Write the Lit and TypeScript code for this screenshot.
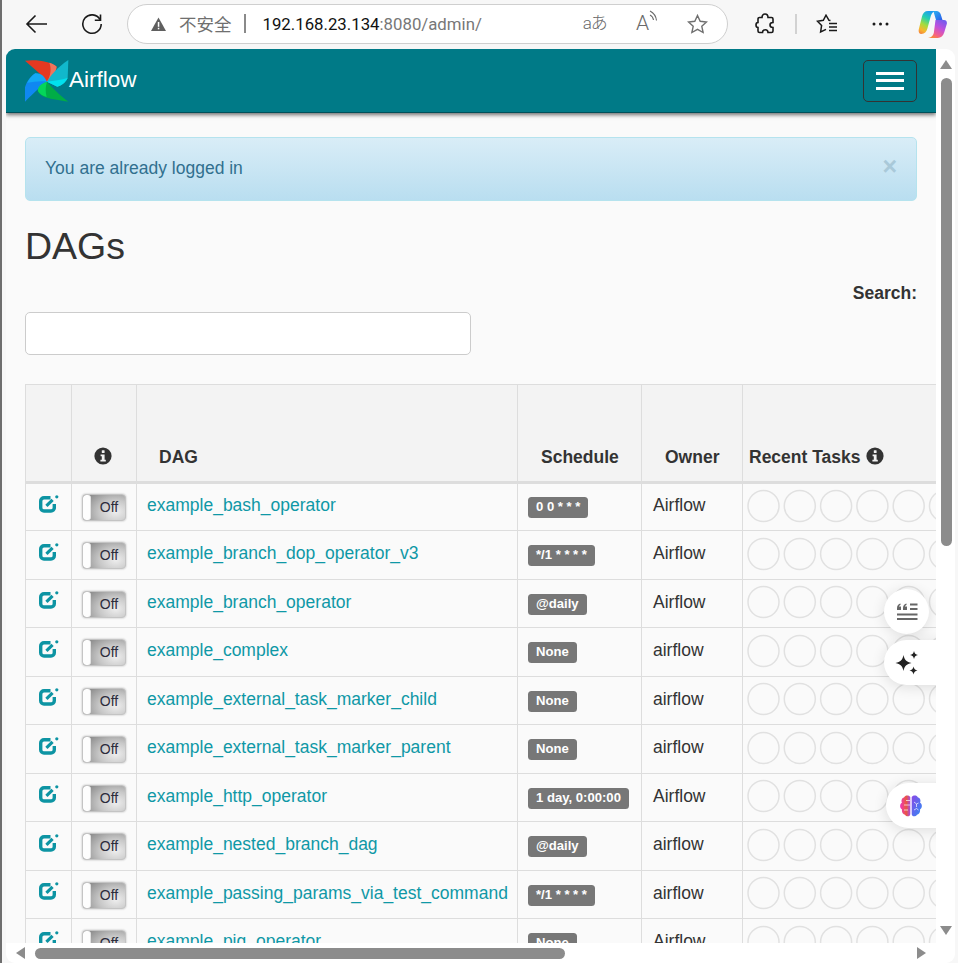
import { LitElement, html, css, svg } from 'lit';
import { customElement } from 'lit/decorators.js';

const dags = [
  ['example_bash_operator', '0 0 * * *', 'Airflow'],
  ['example_branch_dop_operator_v3', '*/1 * * * *', 'Airflow'],
  ['example_branch_operator', '@daily', 'Airflow'],
  ['example_complex', 'None', 'airflow'],
  ['example_external_task_marker_child', 'None', 'airflow'],
  ['example_external_task_marker_parent', 'None', 'airflow'],
  ['example_http_operator', '1 day, 0:00:00', 'Airflow'],
  ['example_nested_branch_dag', '@daily', 'airflow'],
  ['example_passing_params_via_test_command', '*/1 * * * *', 'airflow'],
  ['example_pig_operator', 'None', 'Airflow'],
];

const infoIcon = html`<svg class="info" viewBox="0 0 18 18">
  <circle cx="9" cy="9" r="8.6" fill="#333"></circle>
  <rect x="7.8" y="3.2" width="2.8" height="2.8" rx=".6" fill="#f3f3f3"></rect>
  <path d="M6.6 7.4h4v5.4h1.2v1.8H6.4v-1.8h1.4V9.2H6.6z" fill="#f3f3f3"></path>
</svg>`;

const editIcon = html`<svg class="edit" viewBox="0 0 20 18" fill="none" stroke="#0d94a3">
  <path d="M11.500 2.700H5a3.300 3.300 0 0 0-3.300 3.300v6.700A3.300 3.300 0 0 0 5 16h7a3.300 3.300 0 0 0 3.300-3.300V9" stroke-width="3.400"></path>
  <path d="M7.400 10.800 13.600 4.800" stroke-width="3.200"></path>
  <circle cx="17.800" cy="1.800" r="1.600" fill="#0d94a3" stroke="none"></circle>
</svg>`;

const taskCircles = html`<svg class="tasks" width="330" height="36">
  ${[0, 1, 2, 3, 4, 5, 6, 7, 8].map(
    (i) => svg`<circle cx=${16.5 + i * 36.3} cy="18" r="15.500" fill="#fafafa" stroke="#e1e1e1" stroke-width="1.500"></circle>`
  )}
</svg>`;

const logo = html`<svg class="logo" viewBox="15 28 132 130">
  <path d="M15 32C50 27 90 34 110 50 108 66 95 85 81 95L58 70Z" fill="#e43921"></path>
  <path d="M88 38C98 40 105 45 110 50 108 66 95 85 81 95 92 78 95 55 88 38Z" fill="#f0745c"></path>
  <path d="M145 30 143 84C135 100 122 108 112 110L81 95C90 78 112 52 145 30Z" fill="#11b8cc"></path>
  <path d="M81 95C100 92 125 90 143 84 135 100 122 108 112 110Z" fill="#00e1ee"></path>
  <path d="M15 155 15 112C22 90 34 78 46 70L81 95C62 108 38 132 15 155Z" fill="#0f88f2"></path>
  <path d="M46 70C60 68 72 76 81 95 60 92 40 96 22 98 28 86 36 76 46 70Z" fill="#13a9f5"></path>
  <path d="M145 155 92 146C72 142 60 136 54 124L81 95C96 112 120 136 145 155Z" fill="#00ad46"></path>
  <path d="M54 124C52 112 62 100 81 95 76 110 76 125 80 141 68 138 59 132 54 124Z" fill="#04d659"></path>
</svg>`;

@customElement('app-root')
export class AppRoot extends LitElement {
  static styles = css`
    :host {
      display: block;
      width: 958px;
      height: 963px;
      overflow: hidden;
      font-family: 'Liberation Sans', Arial, sans-serif;
      color: #333;
    }
    .window {
      width: 958px;
      height: 963px;
      box-sizing: border-box;
      background: #f7f7f7;
      border-left: 2px solid #6e6e6e;
      display: flex;
      flex-direction: column;
    }

    /* browser toolbar */
    .toolbar {
      height: 49px;
      flex: none;
      display: flex;
      align-items: center;
      padding-bottom: 2px;
      box-sizing: border-box;
    }
    .toolbar svg {
      display: block;
      flex: none;
    }
    .back {
      margin-left: 23px;
    }
    .reload {
      margin-left: 32px;
    }
    .address {
      margin-left: 24px;
      width: 601px;
      height: 40px;
      box-sizing: border-box;
      background: #fff;
      border: 1px solid #cfcfcf;
      border-radius: 20px;
      display: flex;
      align-items: center;
      padding-left: 23px;
      font-family: Roboto, 'Noto Sans CJK SC', sans-serif;
      font-size: 16.8px;
      color: #111;
    }
    .insecure {
      margin-left: 13px;
      font-family: 'Noto Sans CJK SC', sans-serif;
      font-size: 17.5px;
      color: #6f6f6f;
    }
    .pipe {
      width: 2px;
      height: 19px;
      margin: 0 17px 0 12px;
      background: #8a8a8a;
    }
    .url-rest {
      color: #777;
    }
    .addr-tools {
      margin-left: auto;
      display: flex;
      align-items: center;
      padding-right: 19px;
      color: #6a6a6a;
    }
    .translate {
      font-family: Roboto, 'Noto Sans CJK SC', sans-serif;
      font-size: 17px;
      font-weight: 300;
      line-height: 1;
      letter-spacing: -1px;
    }
    .read {
      margin-left: 29px;
      display: flex;
      align-items: flex-start;
    }
    .read span {
      font-family: Roboto, sans-serif;
      font-weight: 300;
      font-size: 21px;
      line-height: 1;
    }
    .read svg {
      margin-top: -3px;
    }
    .addr-star {
      margin-left: 29px;
    }
    .puzzle {
      margin-left: 27px;
    }
    .tool-sep {
      width: 2px;
      height: 20px;
      margin-left: 20px;
      background: #d2d2d2;
    }
    .favs {
      margin-left: 19px;
    }
    .dots {
      margin-left: 34px;
    }
    .copilot {
      margin-left: 29px;
    }

    /* page area */
    .viewport {
      flex: 1;
      min-height: 0;
      margin: 0 3px 0 4px;
      display: grid;
      grid-template-columns: 930px 19px;
      grid-template-rows: 894px 20px;
      background: #fff;
      border-radius: 9px;
      overflow: hidden;
    }
    .page {
      position: relative;
      overflow: hidden;
      background: #fafafa;
    }
    .navbar {
      height: 64px;
      box-sizing: border-box;
      background: #007a87;
      border-bottom: 1px solid #00505a;
      box-shadow: 0 2px 4px rgba(0, 0, 0, 0.55);
      padding: 0 19px;
      display: flex;
      align-items: center;
      justify-content: space-between;
    }
    .brand {
      display: flex;
      align-items: center;
      color: #fff;
      font-size: 22.5px;
    }
    .logo {
      width: 44px;
      height: 44px;
      display: block;
    }
    .brand span {
      position: relative;
      top: -1px;
    }
    .burger {
      width: 54px;
      height: 42px;
      box-sizing: border-box;
      border: 1px solid #333;
      border-radius: 5px;
      display: flex;
      flex-direction: column;
      align-items: center;
      justify-content: center;
      gap: 4.5px;
    }
    .burger i {
      display: block;
      width: 28px;
      height: 3px;
      background: #fff;
    }
    .content {
      padding: 24px 19px 0;
    }
    .alert {
      height: 64px;
      box-sizing: border-box;
      background: linear-gradient(#d9edf7, #b9def0);
      border: 1px solid #b5e3ee;
      border-radius: 5px;
      padding: 0 19px 2px;
      display: flex;
      align-items: center;
      justify-content: space-between;
      color: #31708f;
      font-size: 17.5px;
    }
    .close {
      color: #a9c9d9;
      font-size: 25px;
      font-weight: bold;
      line-height: 1;
      margin: -4px 0 0 0;
    }
    h2 {
      margin: 24px 0 0;
      font-size: 37.5px;
      font-weight: 400;
      line-height: 42px;
    }
    .search-label {
      margin-top: 16px;
      text-align: right;
      font-size: 17.5px;
      font-weight: bold;
      line-height: 20px;
    }
    .search {
      display: block;
      margin-top: 9px;
      width: 446px;
      height: 43px;
      box-sizing: border-box;
      background: #fff;
      border: 1px solid #ccc;
      border-radius: 5px;
    }

    /* dag table */
    table {
      margin-top: 29px;
      width: 1300px;
      table-layout: fixed;
      border-collapse: collapse;
      font-size: 17.5px;
    }
    th,
    td {
      border: 1px solid #ddd;
      padding: 0;
      overflow: hidden;
      white-space: nowrap;
    }
    thead tr {
      height: 97.5px;
      background: #f3f3f3;
    }
    thead th {
      border-bottom: 3px solid #ddd;
      vertical-align: bottom;
      text-align: left;
      font-weight: bold;
      line-height: 20px;
      padding-bottom: 14px;
    }
    th.sort {
      padding-left: 23px;
    }
    th.dag-head {
      padding-left: 22px;
    }
    th.tasks-head {
      padding-left: 6px;
    }
    .tasks-title {
      display: flex;
      align-items: center;
      gap: 5px;
    }
    th.toggle-head {
      text-align: center;
    }
    .info {
      width: 18px;
      height: 18px;
      display: inline-block;
      vertical-align: bottom;
    }
    th.toggle-head .info {
      position: relative;
      top: -2px;
      left: -1px;
    }
    .tasks-title .info {
      position: relative;
      top: -1px;
    }
    tbody tr {
      height: 48.5px;
    }
    .edit-cell {
      text-align: center;
    }
    .edit {
      display: inline-block;
      width: 20px;
      height: 18px;
      vertical-align: middle;
      position: relative;
      top: -4px;
    }
    .switch {
      margin: 0 auto;
      width: 44px;
      height: 27px;
      box-sizing: border-box;
      position: relative;
      top: 1px;
      display: flex;
      border: 1px solid #c4c4c4;
      border-radius: 4px;
      overflow: hidden;
      background: radial-gradient(ellipse 36px 26px at 78% 68%, #eeeeee 0%, #c8c8c8 45%, #868686 100%);
      box-shadow: 0 0 2px rgba(0, 0, 0, 0.3);
    }
    .switch i {
      width: 7px;
      background: #fdfdfd;
      border-right: 1px solid #e2e2e2;
      border-radius: 3px;
      flex: none;
    }
    .switch span {
      flex: 1;
      text-align: center;
      font-size: 14px;
      line-height: 25px;
      color: #2c2c3c;
      padding-left: 2px;
    }
    .name {
      padding-left: 10px;
      color: #0f98a6;
      line-height: 20px;
      position: relative;
      top: -1px;
    }
    td.name-cell,
    td.owner {
      vertical-align: middle;
    }
    .badge-cell {
      padding-left: 10px;
    }
    .badge {
      display: inline-block;
      background: #777;
      color: #fff;
      font-size: 13.1px;
      font-weight: bold;
      line-height: 1;
      padding: 3px 8px 4.5px;
      border-radius: 3.5px;
    }
    td.owner {
      padding-left: 11px;
    }
    td.owner span {
      position: relative;
      top: -1px;
    }
    td.circles {
      padding-left: 4px;
    }
    .tasks {
      display: block;
      position: relative;
      top: -1px;
    }

    /* floating page assistants */
    .float {
      position: absolute;
      height: 45px;
      background: #fff;
      border-radius: 23px;
      box-shadow: 0 2px 14px rgba(0, 0, 0, 0.12);
      display: flex;
      align-items: center;
    }
    .float svg {
      display: block;
    }
    .f-quote {
      left: 878px;
      top: 540px;
      width: 45px;
      justify-content: center;
    }
    .f-spark {
      left: 878px;
      top: 591px;
      width: 90px;
      padding-left: 10px;
      box-sizing: border-box;
    }
    .f-brain {
      left: 880px;
      top: 734px;
      width: 90px;
      padding-left: 13px;
      box-sizing: border-box;
    }

    /* scrollbars */
    .vbar {
      display: flex;
      flex-direction: column;
      align-items: center;
      padding: 11px 0 8px;
      box-sizing: border-box;
    }
    .vthumb {
      width: 11px;
      height: 468px;
      margin-top: 9px;
      margin-left: 1px;
      background: #8c8c8c;
      border-radius: 6px;
    }
    .arrow-up,
    .arrow-down {
      width: 0;
      height: 0;
      margin-left: 1px;
      border-left: 6.5px solid transparent;
      border-right: 6.5px solid transparent;
    }
    .arrow-up {
      border-bottom: 9px solid #8c8c8c;
    }
    .arrow-down {
      margin-top: auto;
      border-top: 9px solid #8c8c8c;
    }
    .hbar {
      grid-column: 1 / 3;
      display: flex;
      align-items: center;
      padding: 0 29px 0 10px;
      box-sizing: border-box;
    }
    .hthumb {
      width: 530px;
      height: 11px;
      margin-left: 10px;
      background: #8c8c8c;
      border-radius: 6px;
    }
    .arrow-left,
    .arrow-right {
      width: 0;
      height: 0;
      border-top: 6px solid transparent;
      border-bottom: 6px solid transparent;
    }
    .arrow-left {
      border-right: 9px solid #8c8c8c;
    }
    .arrow-right {
      margin-left: auto;
      border-left: 9px solid #8c8c8c;
    }
  `;

  renderToolbar() {
    return html`
      <div class="toolbar">
        <svg class="back" width="24" height="20" viewBox="0 0 24 20" fill="none" stroke="#1a1a1a" stroke-width="1.600">
          <path d="M22 10H2M10.500 1.500 2 10l8.500 8.500"></path>
        </svg>
        <svg class="reload" width="22" height="22" viewBox="0 0 22 22" fill="none" stroke="#1a1a1a" stroke-width="1.600">
          <path d="M19 6.500A9.200 9.200 0 1 0 20.200 11"></path>
          <path d="M19.500 1.500v5.700h-5.700"></path>
        </svg>
        <div class="address">
          <svg width="15" height="14" viewBox="0 0 15 14">
            <path d="M7.500 .5 15 14H0z" fill="#5f5f5f"></path>
            <rect x="6.800" y="5" width="1.500" height="4.800" fill="#fff"></rect>
            <rect x="6.800" y="10.800" width="1.500" height="1.500" fill="#fff"></rect>
          </svg>
          <span class="insecure">不安全</span>
          <i class="pipe"></i>
          <span>192.168.23.134<span class="url-rest">:8080/admin/</span></span>
          <div class="addr-tools">
            <span class="translate">aあ</span>
            <div class="read">
              <span>A</span>
              <svg width="9" height="14" viewBox="0 0 9 14" fill="none" stroke="#6a6a6a" stroke-width="1.100">
                <path d="M1 1c3.500 1.800 6 5 6.500 9.500M1 5c2 1 3.200 2.800 3.500 5"></path>
              </svg>
            </div>
            <svg class="addr-star" width="21" height="20" viewBox="0 0 21 20" fill="none" stroke="#6f6f6f" stroke-width="1.400">
              <path d="M10.500 1.500 13.200 7.300 19.500 8 14.800 12.300 16.100 18.500 10.500 15.400 4.900 18.500 6.200 12.300 1.500 8 7.800 7.300z"></path>
            </svg>
          </div>
        </div>
        <svg class="puzzle" width="20" height="22" viewBox="0 0 20 22" fill="none" stroke="#1a1a1a" stroke-width="1.600">
          <path d="M7 4.500C7 2.500 8.300 1 10 1s3 1.500 3 3.500h3.500a1.500 1.500 0 0 1 1.500 1.500v3.500c-2 0-3 .8-3 2.500s1 2.500 3 2.500V18a1.500 1.500 0 0 1-1.500 1.500H13c0-1.700-1-2.700-2.700-2.700S7.500 17.800 7.500 19.500H4.500A1.500 1.500 0 0 1 3 18v-3.500c-1.200 0-2-1-2-2.500s.8-2.500 2-2.500V6a1.500 1.500 0 0 1 1.500-1.500z"></path>
        </svg>
        <i class="tool-sep"></i>
        <svg class="favs" width="22" height="20" viewBox="0 0 22 20" fill="none" stroke="#1a1a1a" stroke-width="1.500">
          <path d="M14.500 6.500 13 6.300 10 1.200 7.300 6.300 1.500 7.300 5.600 11.500 4.600 18 10 15.300"></path>
          <path d="M13 9.500h8M13 13h8M13 16.500h8"></path>
        </svg>
        <svg class="dots" width="17" height="4" viewBox="0 0 17 4" fill="#1a1a1a">
          <circle cx="2" cy="2" r="1.500"></circle>
          <circle cx="8.500" cy="2" r="1.500"></circle>
          <circle cx="15" cy="2" r="1.500"></circle>
        </svg>
        <svg class="copilot" width="29" height="28" viewBox="0 0 29 28">
          <defs>
            <linearGradient id="cpL" x1=".6" y1="0" x2=".2" y2="1">
              <stop offset="0" stop-color="#1c9df0"></stop>
              <stop offset=".3" stop-color="#22d0b0"></stop>
              <stop offset=".6" stop-color="#a5dc3c"></stop>
              <stop offset=".85" stop-color="#f8b52e"></stop>
              <stop offset="1" stop-color="#f58a3c"></stop>
            </linearGradient>
            <linearGradient id="cpR" x1=".9" y1="0" x2=".3" y2="1">
              <stop offset="0" stop-color="#6a5cf0"></stop>
              <stop offset=".45" stop-color="#c04fdc"></stop>
              <stop offset=".8" stop-color="#f4608a"></stop>
              <stop offset="1" stop-color="#f8883c"></stop>
            </linearGradient>
            <linearGradient id="cpT" x1="0" y1="0" x2="1" y2="1">
              <stop offset="0" stop-color="#2cb5f2"></stop>
              <stop offset="1" stop-color="#2a5be8"></stop>
            </linearGradient>
          </defs>
          <path d="M15 1h3.500c2 0 3.600 1.300 4.200 3.300L24.500 10H18l-1.600-5.500C16 3 15.700 1.800 15 1z" fill="url(#cpT)"></path>
          <path d="M10 1h7c-2.800.8-3.800 3.500-4.600 6.500l-3 11c-.9 3.200-2.800 5.500-6 5.500C1 24 .2 21.800 .8 19.200L4 6.500C4.800 3 6.800 1 10 1z" fill="url(#cpL)"></path>
          <path d="M17.500 10H26c2.400 0 3.400 2 2.700 4.300l-2.500 8.200C25.200 25.700 23 28 19.800 28H10c3 0 5-2.200 5.800-5z" fill="url(#cpR)"></path>
        </svg>
      </div>
    `;
  }

  renderFloats() {
    return html`
      <div class="float f-quote">
        <svg width="22" height="20" viewBox="0 0 22 20" fill="#666">
          <path d="M1 6c0-2.500 1.500-4 3.500-4.500v1.500C3.500 3.300 3 4 3 4.500h2v3.500H1zM7 6c0-2.500 1.500-4 3.500-4.500v1.500C9.500 3.300 9 4 9 4.500h2v3.500H7z"></path>
          <rect x="14" y="1.500" width="7.500" height="2"></rect>
          <rect x="14" y="6" width="7.500" height="2"></rect>
          <rect x="1" y="11.500" width="20.500" height="2"></rect>
          <rect x="1" y="16" width="20.500" height="2"></rect>
        </svg>
      </div>
      <div class="float f-spark">
        <svg width="26" height="24" viewBox="0 0 26 24" fill="#222">
          <path d="M9.500 4c1 5 3 7 8 8-5 1-7 3-8 8-1-5-3-7-8-8 5-1 7-3 8-8z"></path>
          <path d="M20 0c.5 2.500 1.500 3.500 4 4-2.500.5-3.500 1.500-4 4-.5-2.500-1.500-3.500-4-4 2.500-.5 3.500-1.500 4-4z"></path>
          <path d="M19.500 15.500c.5 2.500 1.500 3.500 4 4-2.500.5-3.500 1.500-4 4-.5-2.500-1.500-3.500-4-4 2.500-.5 3.500-1.500 4-4z"></path>
        </svg>
      </div>
      <div class="float f-brain">
        <svg width="24" height="24" viewBox="0 0 24 24" fill="none">
          <defs>
            <linearGradient id="brL" x1="0" y1=".5" x2="1" y2=".5">
              <stop offset="0" stop-color="#f035c0"></stop>
              <stop offset=".6" stop-color="#e9583e"></stop>
              <stop offset="1" stop-color="#a848e6"></stop>
            </linearGradient>
            <linearGradient id="brR" x1="0" y1="0" x2="1" y2="1">
              <stop offset="0" stop-color="#8a48e6"></stop>
              <stop offset="1" stop-color="#2f8cf5"></stop>
            </linearGradient>
          </defs>
          <path d="M11.300 3C10.500 1 6 .5 5 3.500 2.500 4 2 7 3 8.500 .5 10 .5 14 3 15.500c-.5 3 1.500 5 3 5.200 1.500 2.500 5.300 2 5.300-.7z" fill="url(#brL)"></path>
          <path d="M12.700 3c.8-2 5.300-2.500 6.300.5 2.500.5 3 3.500 2 5 2.500 1.500 2.500 5.500 0 7 .5 3-1.500 5-3 5.200-1.500 2.500-5.300 2-5.300-.7z" fill="url(#brR)"></path>
          <path d="M5 11h6M7 6.500h4M5 16h4M15 8l2.500 2 2-1M17.500 10v3M15 16l2.500-1.500 2 1.500" stroke="#fff" stroke-opacity=".75" stroke-width=".9"></path>
        </svg>
      </div>
    `;
  }

  render() {
    return html`
      <div class="window">
        ${this.renderToolbar()}
        <div class="viewport">
          <div class="page">
            <div class="navbar">
              <div class="brand">${logo}<span>Airflow</span></div>
              <div class="burger"><i></i><i></i><i></i></div>
            </div>
            <div class="content">
              <div class="alert">
                <span>You are already logged in</span>
                <span class="close">×</span>
              </div>
              <h2>DAGs</h2>
              <div class="search-label">Search:</div>
              <div class="search"></div>
              <table>
                <colgroup>
                  <col style="width:46px" />
                  <col style="width:65px" />
                  <col style="width:381px" />
                  <col style="width:124px" />
                  <col style="width:101px" />
                  <col />
                </colgroup>
                <thead>
                  <tr>
                    <th></th>
                    <th class="toggle-head">${infoIcon}</th>
                    <th class="dag-head">DAG</th>
                    <th class="sort">Schedule</th>
                    <th class="sort">Owner</th>
                    <th class="tasks-head"><div class="tasks-title">Recent Tasks ${infoIcon}</div></th>
                  </tr>
                </thead>
                <tbody>
                  ${dags.map(
                    ([name, schedule, owner]) => html`
                      <tr>
                        <td class="edit-cell">${editIcon}</td>
                        <td><div class="switch"><i></i><span>Off</span></div></td>
                        <td class="name-cell"><span class="name">${name}</span></td>
                        <td class="badge-cell"><span class="badge">${schedule}</span></td>
                        <td class="owner"><span>${owner}</span></td>
                        <td class="circles">${taskCircles}</td>
                      </tr>
                    `
                  )}
                </tbody>
              </table>
            </div>
            ${this.renderFloats()}
          </div>
          <div class="vbar">
            <i class="arrow-up"></i>
            <div class="vthumb"></div>
            <i class="arrow-down"></i>
          </div>
          <div class="hbar">
            <i class="arrow-left"></i>
            <div class="hthumb"></div>
            <i class="arrow-right"></i>
          </div>
        </div>
      </div>
    `;
  }
}
